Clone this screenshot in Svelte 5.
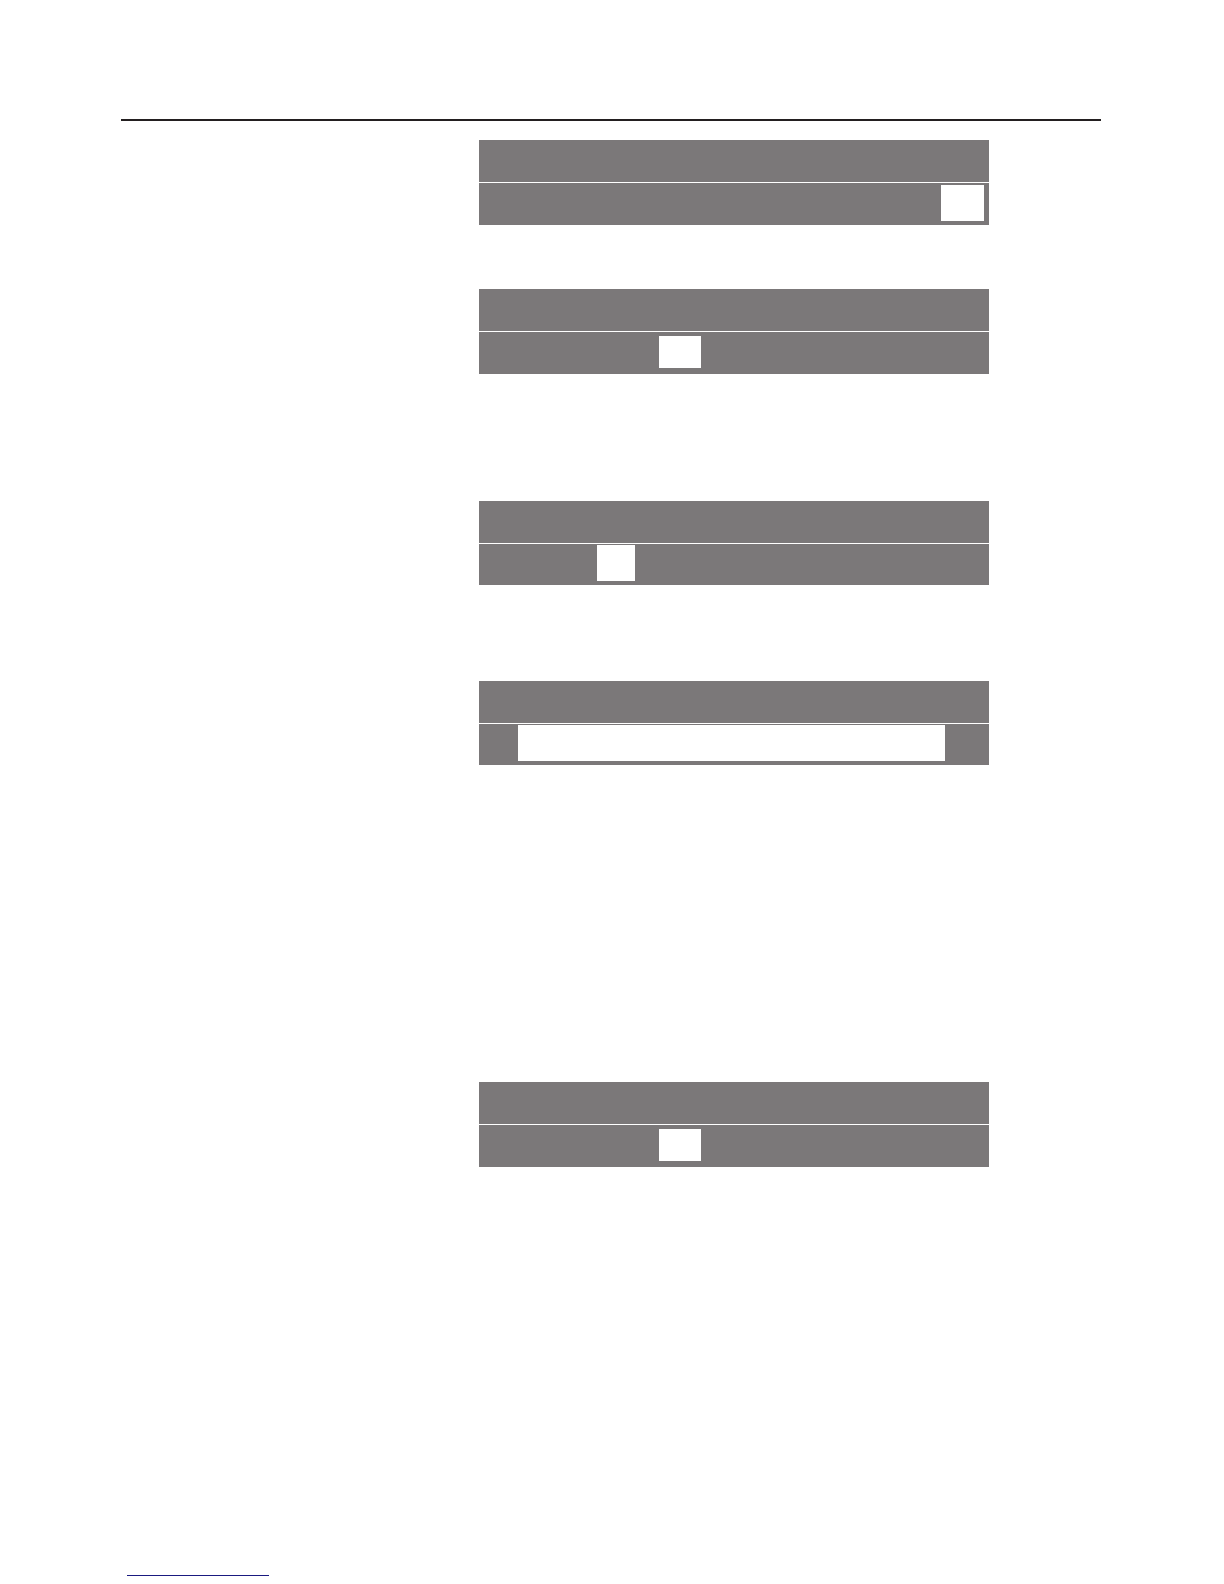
<script lang="ts">
	interface Panel {
		space: number;
		rowHeight: number;
		// left, field and right shares of the lower row
		columns: [number, number, number];
		top: number;
		height: number;
	}

	const panels: Panel[] = [
		{ space: 19, rowHeight: 42, columns: [462, 43, 5], top: 2, height: 36 },
		{ space: 64, rowHeight: 42, columns: [180, 42, 288], top: 4, height: 32 },
		{ space: 127, rowHeight: 41, columns: [118, 38, 354], top: 1, height: 36 },
		{ space: 96, rowHeight: 41, columns: [39, 427, 44], top: 1, height: 36 },
		{ space: 317, rowHeight: 42, columns: [180, 42, 288], top: 4, height: 32 }
	];

	function gridColumns(columns: number[]): string {
		return columns.map((c) => `${c}fr`).join(' ');
	}
</script>

<main class="page">
	<hr class="rule" />

	<div class="content">
		{#each panels as panel}
			<section class="panel" style="margin-top: {panel.space}px">
				<div class="header"></div>
				<div
					class="row"
					style="height: {panel.rowHeight}px; grid-template-columns: {gridColumns(panel.columns)}"
				>
					<div class="field" style="margin-top: {panel.top}px; height: {panel.height}px"></div>
				</div>
			</section>
		{/each}
	</div>

	<footer class="footer">
		<a class="link" href="#top" aria-label="Back to top"></a>
	</footer>
</main>

<style>
	:global(body) {
		margin: 0;
		background: #fff;
		font-family: 'Liberation Sans', Arial, sans-serif;
	}

	.page {
		padding: 119px 123px 8px 121px;
	}

	.rule {
		height: 2px;
		margin: 0;
		border: 0;
		background: #231f20;
	}

	.content {
		display: grid;
		grid-template-columns: 358fr 510fr 112fr;
	}

	.panel {
		grid-column: 2;
		display: grid;
		gap: 1px;
	}

	.header {
		height: 42px;
		background: #7b7879;
	}

	.row {
		display: grid;
		align-items: start;
		background: #7b7879;
	}

	.field {
		grid-column: 2;
		background: #fff;
	}

	.footer {
		margin-top: 408px;
		padding-left: 6px;
	}

	.link {
		display: block;
		width: 142px;
		height: 1px;
		background: #1a1a80;
	}
</style>
